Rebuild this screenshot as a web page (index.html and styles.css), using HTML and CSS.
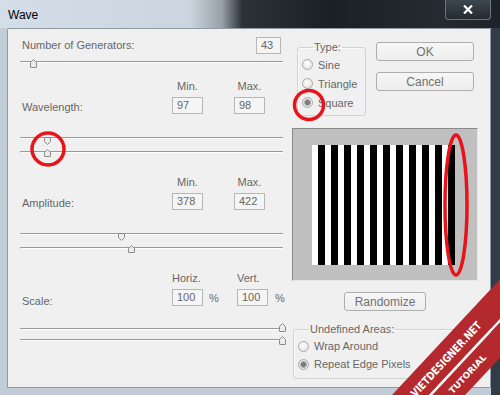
FILE: index.html
```html
<!DOCTYPE html>
<html lang="en">
<head>
    <meta charset="UTF-8">
    <title>Wave</title>
    <link rel="stylesheet" href="styles.css">
</head>
<body>
<div class="window">
    <div class="titlebar">
        <span class="title">Wave</span>
        <div class="close">
            <svg width="10" height="9" viewBox="0 0 10 9"><path d="M1 0.5 9 8.5M9 0.5 1 8.5" stroke="#fff" stroke-width="2.2"/></svg>
        </div>
    </div>

    <div class="client">
        <div class="left-col">
            <div class="gen-row">
                <span class="label">Number of Generators:</span>
                <span class="field gen-field">43</span>
            </div>
            <div class="slider single">
                <div class="track"></div>
                <svg class="thumb" style="left:10px;top:3px" width="7" height="9" viewBox="0 0 7 9"><path d="M3.5 .5 6.5 3.5V8a.5.5 0 0 1-.5.5H1A.5.5 0 0 1 .5 8V3.5z" fill="#ececec" stroke="#8a8a8a"/></svg>
            </div>

            <div class="param">
                <div class="grid">
                    <span></span><span class="head">Min.</span><span></span><span class="head">Max.</span><span></span>
                    <span class="label">Wavelength:</span><span class="field">97</span><span></span><span class="field">98</span><span></span>
                </div>
                <div class="slider double">
                    <div class="track"></div>
                    <div class="track second"></div>
                    <svg class="thumb" style="left:24px;top:5px" width="7" height="8" viewBox="0 0 7 8"><path d="M1 .5h5a.5.5 0 0 1 .5.5v3.5L3.5 7.5 .5 4.5V1a.5.5 0 0 1 .5-.5z" fill="#ececec" stroke="#8a8a8a"/></svg>
                    <svg class="thumb" style="left:24px;top:17px" width="7" height="8" viewBox="0 0 7 8"><path d="M3.5 .5 6.5 3.5V7a.5.5 0 0 1-.5.5H1A.5.5 0 0 1 .5 7V3.5z" fill="#ececec" stroke="#8a8a8a"/></svg>
                </div>
            </div>

            <div class="param">
                <div class="grid">
                    <span></span><span class="head">Min.</span><span></span><span class="head">Max.</span><span></span>
                    <span class="label">Amplitude:</span><span class="field">378</span><span></span><span class="field">422</span><span></span>
                </div>
                <div class="slider double">
                    <div class="track"></div>
                    <div class="track second"></div>
                    <svg class="thumb" style="left:98px;top:5px" width="7" height="8" viewBox="0 0 7 8"><path d="M1 .5h5a.5.5 0 0 1 .5.5v3.5L3.5 7.5 .5 4.5V1a.5.5 0 0 1 .5-.5z" fill="#ececec" stroke="#8a8a8a"/></svg>
                    <svg class="thumb" style="left:108px;top:17px" width="7" height="8" viewBox="0 0 7 8"><path d="M3.5 .5 6.5 3.5V7a.5.5 0 0 1-.5.5H1A.5.5 0 0 1 .5 7V3.5z" fill="#ececec" stroke="#8a8a8a"/></svg>
                </div>
            </div>

            <div class="param">
                <div class="grid scale">
                    <span></span><span class="head start">Horiz.</span><span></span><span class="head start">Vert.</span><span></span>
                    <span class="label">Scale:</span><span class="field">100</span><span class="pct">%</span><span class="field">100</span><span class="pct">%</span>
                </div>
                <div class="slider double tight">
                    <div class="track"></div>
                    <div class="track second"></div>
                    <svg class="thumb" style="left:259px;top:-1px" width="7" height="9" viewBox="0 0 7 9"><path d="M3.5 .5 6.5 3.5V8a.5.5 0 0 1-.5.5H1A.5.5 0 0 1 .5 8V3.5z" fill="#ececec" stroke="#8a8a8a"/></svg>
                    <svg class="thumb" style="left:259px;top:12px" width="7" height="9" viewBox="0 0 7 9"><path d="M3.5 .5 6.5 3.5V8a.5.5 0 0 1-.5.5H1A.5.5 0 0 1 .5 8V3.5z" fill="#ececec" stroke="#8a8a8a"/></svg>
                </div>
            </div>
        </div>

        <div class="right-col">
            <div class="top-row">
                <fieldset class="group type-group">
                    <legend>Type:</legend>
                    <div class="option"><span class="radio"></span>Sine</div>
                    <div class="option"><span class="radio"></span>Triangle</div>
                    <div class="option"><span class="radio on"></span>Square</div>
                </fieldset>
                <div class="buttons">
                    <div class="btn">OK</div>
                    <div class="btn">Cancel</div>
                </div>
            </div>

            <div class="preview">
                <div class="pattern"></div>
            </div>

            <div class="btn randomize">Randomize</div>

            <fieldset class="group areas-group">
                <legend>Undefined Areas:</legend>
                <div class="option"><span class="radio"></span>Wrap Around</div>
                <div class="option"><span class="radio on"></span>Repeat Edge Pixels</div>
            </fieldset>
        </div>
    </div>

    <svg class="overlay" width="500" height="395" viewBox="0 0 500 395">
        <circle cx="48" cy="149" r="16" fill="none" stroke="#e8141b" stroke-width="3.5"/>
        <circle cx="309" cy="105" r="14.5" fill="none" stroke="#e8141b" stroke-width="3.5"/>
        <ellipse cx="456" cy="205" rx="11" ry="70" fill="none" stroke="#e8141b" stroke-width="3.5"/>
        <g transform="translate(392 395) rotate(-47)">
            <rect x="-30" y="0" width="240" height="27" fill="#b3292d"/>
            <rect x="-30" y="27" width="240" height="2.5" fill="#f4f4f4"/>
            <rect x="-30" y="29.5" width="240" height="24" fill="#b3292d"/>
            <text x="14" y="19" textLength="98" lengthAdjust="spacingAndGlyphs" font-size="11" font-weight="bold" fill="#fff" font-family="DejaVu Sans Condensed, DejaVu Sans, sans-serif">VIETDESIGNER.NET</text>
            <text x="42" y="44" textLength="50" lengthAdjust="spacingAndGlyphs" font-size="8.5" font-weight="bold" fill="#fff" font-family="DejaVu Sans Condensed, DejaVu Sans, sans-serif">TUTORIAL</text>
        </g>
    </svg>
</div>
</body>
</html>
```

FILE: styles.css
```css
* {
    box-sizing: border-box;
}
html, body {
    margin: 0;
}
body {
    width: 500px;
    height: 395px;
    overflow: hidden;
    font-family: 'Liberation Sans', Arial, sans-serif;
    font-size: 11px;
    color: #676767;
}
.window {
    position: relative;
    width: 500px;
    height: 395px;
    display: flex;
    flex-direction: column;
    background: linear-gradient(to left, #313c46 0 9px, #c2ccd6 9px);
}
.titlebar {
    height: 28px;
    flex: none;
    display: flex;
    padding-left: 8px;
    background: linear-gradient(to right, #d4dee8 0, #cad5df 190px, #98a0a8 222px, #2b3238 242px, #1b2025 330px, #252b31 440px, #1c2227 100%);
}
.title {
    font-size: 12px;
    color: #000;
    margin-top: 8px;
}
.close {
    margin-left: auto;
    margin-right: 9px;
    width: 46px;
    height: 20px;
    border: 1px solid #6a7580;
    border-top: none;
    border-radius: 0 0 4px 4px;
    background: linear-gradient(#3d474f, #232a30);
    display: flex;
    align-items: center;
    justify-content: center;
}
.client {
    flex: 1;
    margin: 0 9px 7px 7px;
    background: #f0f0f0;
    border: 1px solid #8e99a4;
    border-radius: 2px 2px 0 0;
    display: flex;
}

/* left column */
.left-col {
    width: 280px;
    padding: 8px 5px 0 12px;
}
.gen-row {
    height: 17px;
    display: flex;
    align-items: center;
    justify-content: space-between;
}
.label {
    padding-left: 2px;
    line-height: 13px;
}
.field {
    display: block;
    height: 17px;
    border: 1px solid #b6b6b6;
    background: #f5f5f5;
    padding-left: 4px;
    line-height: 15px;
    color: #666;
}
.gen-field {
    width: 25px;
    margin-right: 2px;
}
.slider {
    position: relative;
}
.slider.single {
    height: 12px;
    margin-top: 2px;
    padding-top: 5px;
}
.slider.double {
    height: 26px;
    margin-top: 18px;
    padding-top: 5px;
}
.slider.tight {
    padding-top: 4px;
}
.track {
    height: 2px;
    border-top: 1px solid #999;
    border-bottom: 1px solid #fff;
    border-left: 1px solid #b0b0b0;
    border-radius: 2px 0 0 2px;
}
.track.second {
    margin-top: 12px;
}
.slider.tight .track.second {
    margin-top: 9px;
}
.thumb {
    position: absolute;
}
.param {
    margin-top: 18px;
}
.single + .param {
    margin-top: 12px;
}
.grid {
    display: grid;
    grid-template-columns: 152px 31px 31px 31px 1fr;
    grid-template-rows: 13px 17px;
    row-gap: 4px;
}
.grid.scale {
    grid-template-columns: 152px 31px 34px 31px 1fr;
}
.grid .label {
    align-self: end;
}
.grid.scale .label {
    margin-bottom: -2px;
}
.head {
    text-align: center;
    line-height: 13px;
    white-space: nowrap;
}
.head.start {
    text-align: left;
}
.pct {
    align-self: center;
    padding-left: 6px;
}
.pct:last-child {
    padding-left: 7px;
}

/* right column */
.right-col {
    flex: 1;
    padding: 12px 12px 0 4px;
}
.top-row {
    display: flex;
}
.group {
    margin: 0;
    border: 1px solid #d2d2d2;
    border-radius: 3px;
    box-shadow: inset 1px 1px 0 #fafafa;
}
.group legend {
    margin-left: 11px;
    padding: 0 1px;
    line-height: 13px;
}
.type-group {
    width: 69px;
    margin-left: 5px;
    padding: 1px 0 3px 4px;
}
.type-group .option {
    height: 19px;
}
.areas-group {
    width: 185px;
    margin-top: 12px;
    margin-left: 1px;
    padding: 1px 0 5px 4px;
}
.areas-group .option {
    height: 18px;
}
.option {
    display: flex;
    align-items: center;
    gap: 5px;
    white-space: nowrap;
}
.radio {
    width: 11px;
    height: 11px;
    border-radius: 50%;
    border: 1px solid #a9a9a9;
    background: radial-gradient(circle at 45% 40%, #fdfdfd, #dedede);
}
.radio.on {
    background: radial-gradient(circle, #7c7c7c 0 2px, #a8a8a8 3px, #e4e4e4 3.6px, #f6f6f6 100%);
}
.buttons {
    margin-left: 10px;
    margin-top: 1px;
    width: 98px;
    display: flex;
    flex-direction: column;
    gap: 11px;
}
.btn {
    height: 19px;
    border: 1px solid #aeaeae;
    border-radius: 3px;
    background: linear-gradient(#f6f6f6, #eeeeee);
    color: #727272;
    font-size: 12px;
    display: flex;
    align-items: center;
    justify-content: center;
}
.preview {
    width: 186px;
    height: 153px;
    margin-top: 12px;
    border: 1px solid #8a8a8a;
    border-right-color: #e6e6e6;
    border-bottom-color: #e6e6e6;
    background: #c0c0c0;
    padding: 16px 0 0 19px;
}
.pattern {
    width: 143px;
    height: 120px;
    background: repeating-linear-gradient(to right, #fff 0 6px, #000 6px 13px);
}
.randomize {
    width: 82px;
    margin: 11px 0 0 52px;
}

.overlay {
    position: absolute;
    top: 0;
    left: 0;
    pointer-events: none;
}
```
